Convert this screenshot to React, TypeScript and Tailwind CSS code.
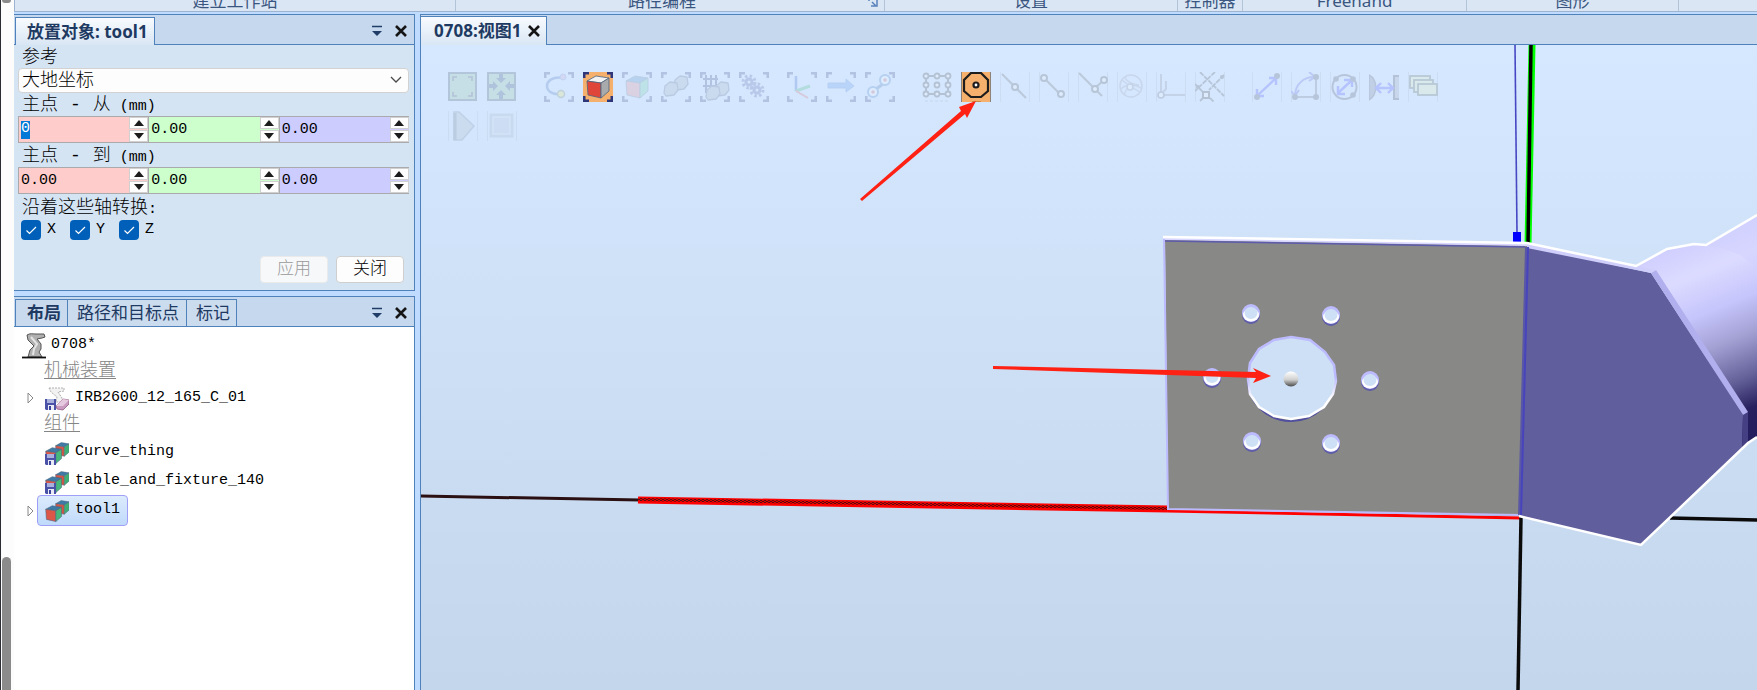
import type { ReactNode } from "react";

const songti = "font-['Liberation_Mono','Noto_Sans_CJK_SC_Light','Noto_Sans_CJK_SC',monospace] font-light";

type IconProps = { children: ReactNode; dim?: boolean };

function Glyph({ children, dim = true }: IconProps) {
  return (
    <svg viewBox="0 0 30 30" className={dim ? "block size-[30px] opacity-20" : "block size-[30px]"} fill="none" aria-hidden="true">
      {children}
    </svg>
  );
}

function Corners() {
  return <path d="M1 6V1H6M24 1h5v5M29 24v5h-5M6 29H1v-5" stroke="#2c3678" strokeWidth="3" />;
}

function SideLines() {
  return <path d="M.5 0v30M29.5 0v30" stroke="#a9b8cc" strokeWidth="1" />;
}

function Cube({ x = 0, y = 0, s = 1, front, top, side }: { x?: number; y?: number; s?: number; front: string; top: string; side: string }) {
  return (
    <g transform={`translate(${x} ${y}) scale(${s})`} stroke="#4c6580" strokeWidth="0.8" strokeLinejoin="round">
      <path d="M1 6 10 1l13 2-8 5z" fill={top} />
      <path d="M1 6l14 2v15L2 20z" fill={front} />
      <path d="M15 8l8-5v13l-8 7z" fill={side} />
    </g>
  );
}

function Blob({ x, y }: { x: number; y: number }) {
  return (
    <path
      transform={`translate(${x} ${y})`}
      d="M2 5 7 1l7 1 1 7-4 5-8 1-2-3z"
      fill="#a6aeb8"
      stroke="#4f6078"
      strokeWidth="1.3"
      strokeLinejoin="round"
    />
  );
}

type Tool = { name: string; active?: boolean; icon: ReactNode };

const viewTools: Tool[] = [
  {
    name: "查看全部",
    icon: (
      <Glyph>
        <rect x="1" y="1" width="27" height="27" fill="#8fc48a" stroke="#2d4450" strokeWidth="2" />
        <path d="M5 9V5h4M20 5h4v4M24 20v4h-4M9 24H5v-4" stroke="#334" strokeWidth="1.6" />
      </Glyph>
    ),
  },
  {
    name: "查看中心",
    icon: (
      <Glyph>
        <rect x="1" y="1" width="27" height="27" fill="#8fc48a" stroke="#2d4450" strokeWidth="2" />
        <path d="M14 11 9 6h3V2h4v4h3zM14 18l-5 5h3v4h4v-4h3zM11 14 6 9v3H2v4h4v3zM18 14l5-5v3h4v4h-4v3z" fill="#1e3a5c" />
      </Glyph>
    ),
  },
];

const selectTools: Tool[] = [
  {
    name: "选择曲线",
    icon: (
      <Glyph>
        <Corners />
        <path d="M19 6C9 4 3 9 3 14c0 6 7 9 14 8" stroke="#3a66b8" strokeWidth="2.5" />
        <circle cx="19" cy="5" r="3" fill="#c9a0c8" stroke="#7684c8" />
        <circle cx="17" cy="22" r="3.5" fill="#f3e94a" stroke="#6a7860" strokeWidth="1.5" />
      </Glyph>
    ),
  },
  {
    name: "选择表面",
    active: true,
    icon: (
      <Glyph dim={false}>
        <rect width="30" height="30" fill="#f4b06c" />
        <Corners />
        <Cube x={3} y={3} front="#e0453a" top="#f2f2f2" side="#a9aaac" />
      </Glyph>
    ),
  },
  {
    name: "选择物体",
    icon: (
      <Glyph>
        <Corners />
        <Cube x={3} y={3} front="#ef7d78" top="#3f82b8" side="#5fd393" />
      </Glyph>
    ),
  },
  {
    name: "选择部件",
    icon: (
      <Glyph>
        <Corners />
        <Blob x={12} y={3} />
        <Blob x={2} y={9} />
      </Glyph>
    ),
  },
  {
    name: "选择组",
    icon: (
      <Glyph>
        <Corners />
        <path d="M3 7h15M3 14h15M6 3v18M11 3v14M16 3v11" stroke="#2c3678" strokeWidth="2" />
        <Blob x={14} y={9} />
        <Blob x={5} y={13} />
      </Glyph>
    ),
  },
  {
    name: "选择机械装置",
    icon: (
      <Glyph>
        <Corners />
        <circle cx="10" cy="10" r="3" stroke="#46509c" strokeWidth="3" />
        <circle cx="10" cy="10" r="6" stroke="#46509c" strokeWidth="3" strokeDasharray="2.4 2.3" />
        <circle cx="18" cy="18" r="3" stroke="#46509c" strokeWidth="3" />
        <circle cx="18" cy="18" r="6" stroke="#46509c" strokeWidth="3" strokeDasharray="2.4 2.3" />
      </Glyph>
    ),
  },
];

const targetTools: Tool[] = [
  {
    name: "选择目标点或框架",
    icon: (
      <Glyph>
        <Corners />
        <path d="M9 4v15" stroke="#2456c0" strokeWidth="2.5" />
        <path d="m9 19 14-5" stroke="#31b565" strokeWidth="3" />
        <path d="m9 19 12 7" stroke="#e05252" strokeWidth="2" />
      </Glyph>
    ),
  },
  {
    name: "选择移动指令",
    icon: (
      <Glyph>
        <Corners />
        <path d="M2 11h18V7l8 7-8 6v-4H2z" fill="#4d8ee8" stroke="#346bc0" strokeWidth="0.8" />
      </Glyph>
    ),
  },
  {
    name: "选择路径",
    icon: (
      <Glyph>
        <Corners />
        <path d="m11 17 7-5" stroke="#3b66a8" strokeWidth="3" />
        <circle cx="8" cy="20" r="5" fill="#fff" stroke="#3b7ac0" strokeWidth="2" />
        <circle cx="20" cy="8" r="5" fill="#fff" stroke="#3b7ac0" strokeWidth="2" />
        <circle cx="8" cy="20" r="1.8" fill="#d05050" />
        <circle cx="20" cy="8" r="1.8" fill="#d05050" />
      </Glyph>
    ),
  },
];

const snapTools: Tool[] = [
  {
    name: "捕捉对象",
    icon: (
      <Glyph>
        <path d="M4 4h22v18H4z" stroke="#333" strokeWidth="2" />
        <g fill="#fff" stroke="#333" strokeWidth="1.8">
          <circle cx="4" cy="4" r="2.5" /><circle cx="15" cy="4" r="2.5" /><circle cx="26" cy="4" r="2.5" />
          <circle cx="4" cy="13" r="2.5" /><circle cx="15" cy="13" r="2.5" /><circle cx="26" cy="13" r="2.5" />
          <circle cx="4" cy="22" r="2.5" /><circle cx="15" cy="22" r="2.5" /><circle cx="26" cy="22" r="2.5" />
        </g>
        <path d="M3 29h25" stroke="#89a" strokeDasharray="3 2" />
      </Glyph>
    ),
  },
  {
    name: "捕捉中心",
    active: true,
    icon: (
      <Glyph dim={false}>
        <rect width="30" height="30" fill="#f4b06c" />
        <path d="M.5 0v30M29.5 0v30" stroke="#8e8378" />
        <path d="M10 1h10l7 7v11l-7 6H10l-7-6V8z" stroke="#1d1d1d" strokeWidth="2.2" />
        <circle cx="15" cy="13" r="2.5" fill="#fff" stroke="#1d1d1d" strokeWidth="2.2" />
        <path d="M11 29.500h9" stroke="#d08844" />
      </Glyph>
    ),
  },
  {
    name: "捕捉中点",
    icon: (
      <Glyph>
        <SideLines />
        <path d="m2 2 24 24" stroke="#555" strokeWidth="2" />
        <circle cx="15" cy="15" r="3" fill="#fff" stroke="#444" strokeWidth="2" />
      </Glyph>
    ),
  },
  {
    name: "捕捉末端",
    icon: (
      <Glyph>
        <SideLines />
        <path d="m5 6 17 17" stroke="#555" strokeWidth="2" />
        <circle cx="5" cy="6" r="3" fill="#fff" stroke="#444" strokeWidth="2" />
        <circle cx="22" cy="22" r="3" fill="#fff" stroke="#444" strokeWidth="2" />
      </Glyph>
    ),
  },
  {
    name: "捕捉边缘",
    icon: (
      <Glyph>
        <SideLines />
        <path d="m1 1 23 23M17 16l9-8" stroke="#555" strokeWidth="2" />
        <circle cx="17" cy="17" r="3" fill="#fff" stroke="#444" strokeWidth="2" />
        <circle cx="26" cy="8" r="3" fill="#fff" stroke="#444" strokeWidth="2" />
      </Glyph>
    ),
  },
  {
    name: "捕捉重心",
    icon: (
      <Glyph>
        <SideLines />
        <circle cx="14" cy="14" r="11" stroke="#99a" strokeWidth="1.5" />
        <path d="M4 17c4-5 16-5 21 0M5 8c5 4 10 8 18 12M8 5c1 5 10 8 14 8M7 22l7-11" stroke="#99a" strokeWidth="1.3" />
        <circle cx="13" cy="15" r="3" fill="#fff" stroke="#889" strokeWidth="1.5" />
      </Glyph>
    ),
  },
  {
    name: "捕捉本地原点",
    icon: (
      <Glyph>
        <SideLines />
        <path d="M5 2v18M8 23h21M7 20l3-3V9" stroke="#889" strokeWidth="2" />
        <circle cx="5" cy="23" r="3" fill="#fff" stroke="#667" strokeWidth="1.6" />
      </Glyph>
    ),
  },
  {
    name: "捕捉网格",
    icon: (
      <Glyph>
        <SideLines />
        <path d="m5 0 24 24M29 3 14 18M20 0 0 19M0 12l8 8M15 26l4 4M8 26l-3 3" stroke="#444" strokeWidth="1.8" strokeDasharray="5 1" />
        <circle cx="3" cy="15" r="2" fill="#444" />
        <circle cx="27" cy="5" r="2" fill="#444" />
        <rect x="8" y="20" width="6" height="6" fill="#fff" stroke="#333" strokeWidth="2" />
      </Glyph>
    ),
  },
];

const measureTools: Tool[] = [
  {
    name: "点到点",
    icon: (
      <Glyph>
        <SideLines />
        <path d="M6 23 23 7M5 17v7h7M17 6h7v7" stroke="#3a38ff" strokeWidth="2.4" />
        <circle cx="5" cy="25" r="3" fill="#445" />
        <circle cx="25" cy="4" r="3" fill="#445" />
      </Glyph>
    ),
  },
  {
    name: "角度",
    icon: (
      <Glyph>
        <SideLines />
        <path d="M25 5v20H4" stroke="#667" strokeWidth="2" />
        <path d="M4 24C4 13 12 5 23 5M18 0l6 5-6 4M0 19l4 5 4-6" stroke="#5856d8" strokeWidth="2" />
        <circle cx="4" cy="25" r="3" fill="#445" />
        <circle cx="25" cy="25" r="3" fill="#445" />
        <circle cx="25" cy="5" r="3" fill="#445" />
      </Glyph>
    ),
  },
  {
    name: "直径",
    icon: (
      <Glyph>
        <SideLines />
        <circle cx="14.5" cy="15" r="12" stroke="#445" strokeWidth="2" />
        <path d="M8 21 21 9M8 14v8h7M14 8h8v7" stroke="#3a38ff" strokeWidth="2.4" />
        <circle cx="6" cy="7" r="2.8" fill="#445" />
        <circle cx="23" cy="7" r="2.8" fill="#445" />
        <circle cx="23" cy="23" r="2.8" fill="#445" />
      </Glyph>
    ),
  },
  {
    name: "最短距离",
    icon: (
      <Glyph>
        <path d="M0 3c9 5 9 19 0 25z" fill="#778" stroke="#445" strokeWidth="1.5" />
        <path d="M30 4h-5v23h5" fill="#99a" stroke="#334" strokeWidth="2" />
        <path d="M7 16h17M12 11l-5 5 5 5M19 11l5 5-5 5" stroke="#3a38ff" strokeWidth="2.4" />
      </Glyph>
    ),
  },
  {
    name: "保持测量",
    icon: (
      <Glyph>
        <SideLines />
        <g fill="#eef2a8" stroke="#44543a" strokeWidth="1.8">
          <rect x="2" y="4" width="20" height="12" />
          <rect x="6" y="8" width="19" height="12" />
          <rect x="10" y="12" width="19" height="11" />
        </g>
      </Glyph>
    ),
  },
];

const simulationTools: Tool[] = [
  {
    name: "播放",
    icon: (
      <Glyph>
        <SideLines />
        <path d="M6 1h5l15 14-12 14H6z" fill="#a9b5be" stroke="#6f8294" strokeWidth="1.5" />
        <path d="M7 2v27" stroke="#566b78" strokeWidth="3" />
      </Glyph>
    ),
  },
  {
    name: "停止",
    icon: (
      <Glyph>
        <SideLines />
        <rect x="4" y="4" width="21" height="21" fill="#b4c2d2" stroke="#9dacbf" strokeWidth="3" />
        <rect x="6" y="6" width="17" height="17" stroke="#d4dde8" strokeWidth="1.5" />
      </Glyph>
    ),
  },
];

function ToolGroup({ tools }: { tools: Tool[] }) {
  return (
    <div className="flex gap-[9px]">
      {tools.map((t) => (
        <button key={t.name} type="button" aria-label={t.name} aria-pressed={!!t.active} className="size-[30px]">
          {t.icon}
        </button>
      ))}
    </div>
  );
}

function CloseIcon() {
  return (
    <svg viewBox="0 0 12 12" className="block size-3" aria-hidden="true">
      <path d="M1 1l10 10M11 1 1 11" stroke="#151515" strokeWidth="2.6" />
    </svg>
  );
}

function PanelControls() {
  return (
    <div className="ml-auto flex items-center gap-3 pr-[7px]">
      <button type="button" aria-label="窗口选项">
        <svg viewBox="0 0 12 12" className="block size-3" aria-hidden="true">
          <path d="M1 1.500h10" stroke="#1f3d66" strokeWidth="1.5" />
          <path d="M1 6h10l-5 5z" fill="#1f3d66" />
        </svg>
      </button>
      <button type="button" aria-label="关闭面板">
        <CloseIcon />
      </button>
    </div>
  );
}

const ribbonGroups = [
  { label: "建立工作站", width: "w-[441px]" },
  { label: "路径编程", width: "w-[429px]", launcher: true },
  { label: "设置", width: "w-[293px]" },
  { label: "控制器", width: "w-[65px]" },
  { label: "Freehand", width: "w-[224px]" },
  { label: "图形", width: "w-[212px]" },
];

function Ribbon() {
  return (
    <header className="flex h-3 shrink-0 overflow-hidden border-b border-l border-[#9db3cf] bg-[#dae6f4] text-[17px] text-[#3a5680]">
      {ribbonGroups.map((g) => (
        <div key={g.label} className={`${g.width} flex shrink-0 items-end justify-center border-r border-[#b4c4d8]`}>
          <span className={g.launcher ? "ml-auto leading-5" : "leading-5"}>{g.label}</span>
          {g.launcher && (
            <button type="button" aria-label="路径编程设置" className="mb-1 ml-auto mr-[6px]">
              <svg viewBox="0 0 10 10" className="block size-[10px]" aria-hidden="true">
                <path d="M1 1h3M1 1v3M4 5l4 4M9 3v6H3" stroke="#5a82bb" strokeWidth="1.5" fill="none" />
              </svg>
            </button>
          )}
        </div>
      ))}
    </header>
  );
}

function AxisInput({ label, value, tone, selected }: { label: string; value: string; tone: string; selected?: boolean }) {
  return (
    <div className={`flex h-[27px] min-w-0 flex-1 border-y border-l border-[#aaa9ab] ${tone}`}>
      <div className="flex min-w-0 flex-1 items-center pl-[2px]">
        <input
          aria-label={label}
          defaultValue={value}
          className={
            selected
              ? "block h-[18px] w-[9px] bg-[#0078d7] text-[15px] text-white outline-none"
              : "block h-full w-full bg-transparent text-[15px] text-black outline-none"
          }
        />
      </div>
      <div className="flex w-[19px] shrink-0 flex-col justify-between">
        <button type="button" aria-label={`${label} 增加`} className="flex h-3 items-center justify-center border border-[#d0d0d0] bg-[#fdfdfd]">
          <svg viewBox="0 0 10 6" className="h-[6px] w-[10px]" aria-hidden="true"><path d="M0 6h10L5 0z" fill="#1b1b1b" /></svg>
        </button>
        <button type="button" aria-label={`${label} 减少`} className="flex h-3 items-center justify-center border border-[#d0d0d0] bg-[#fdfdfd]">
          <svg viewBox="0 0 10 6" className="h-[6px] w-[10px]" aria-hidden="true"><path d="M0 0h10L5 6z" fill="#1b1b1b" /></svg>
        </button>
      </div>
    </div>
  );
}

function PointRow({ direction, first }: { direction: string; first: string }) {
  return (
    <fieldset>
      <legend className="block h-6 pl-1 text-[18px] leading-[26px]">
        主点<span className="px-3">-</span>
        {direction}
        <span className="pl-[9px] text-[15px]">(mm)</span>
      </legend>
      <div className="flex">
        <AxisInput label={`${direction} X`} value={first} tone="bg-[#ffcccc]" selected={first === "0"} />
        <AxisInput label={`${direction} Y`} value="0.00" tone="bg-[#ccffcc]" />
        <AxisInput label={`${direction} Z`} value="0.00" tone="bg-[#ccccff]" />
      </div>
    </fieldset>
  );
}

function AxisCheck({ axis }: { axis: string }) {
  return (
    <label className="flex h-5 items-center gap-[6px] text-[15px] leading-5">
      <span className="relative block size-5">
        <input type="checkbox" defaultChecked className="peer block size-5 appearance-none rounded bg-[#8a8f96] checked:bg-[#005fb8]" />
        <svg viewBox="0 0 20 20" className="pointer-events-none absolute inset-0 hidden size-5 peer-checked:block" fill="none" aria-hidden="true">
          <path d="m5.500 10.500 3 3 6.500-6.500" stroke="#fff" strokeWidth="1.2" />
        </svg>
      </span>
      {axis}
    </label>
  );
}

function PlacePanel() {
  return (
    <section className="border-y border-r border-[#4f81bb]">
      <div className="flex h-[30px] border-b border-[#4f81bb] bg-[#c6d8ed] pl-px pt-[2px]">
        <h2 className="-mb-px flex h-[28px] items-center border-x border-t border-[#4f81bb] bg-gradient-to-b from-[#f8fbfe] to-[#d9e6f4] pl-[11px] pr-[6px] text-[17px] font-bold leading-6 text-[#1e3a62]">
          放置对象: tool1
        </h2>
        <PanelControls />
      </div>
      <form className={`bg-[#d5e4f3] pb-[7px] pl-1 pr-[5px] text-black ${songti}`}>
        <label htmlFor="reference" className="block h-[23px] pl-1 text-[18px] leading-[26px]">参考</label>
        <div className="relative h-6">
          <select id="reference" className="block h-[25px] w-full appearance-none rounded-sm border border-[#d2d2d2] bg-[#fdfdfd] pl-[3px] text-[18px] leading-6">
            <option>大地坐标</option>
          </select>
          <svg viewBox="0 0 12 8" className="pointer-events-none absolute right-[7px] top-2 h-2 w-3" fill="none" aria-hidden="true">
            <path d="m1 1 5 5 5-5" stroke="#4a4a4a" strokeWidth="1.3" />
          </svg>
        </div>
        <PointRow direction="从" first="0" />
        <PointRow direction="到" first="0.00" />
        <p className="h-[26px] pl-1 text-[18px] leading-7">沿着这些轴转换<span className="text-[15px]">:</span></p>
        <div className="flex gap-[14px] pl-[3px]">
          <AxisCheck axis="X" />
          <AxisCheck axis="Y" />
          <AxisCheck axis="Z" />
        </div>
        <div className="flex justify-end gap-2 pr-[5px] pt-4 text-[17px]">
          <button type="button" disabled className="h-[27px] w-[68px] rounded border border-[#eaeaea] bg-[#f7f8f9] leading-6 text-[#999]">应用</button>
          <button type="button" className="h-[27px] w-[68px] rounded border border-[#cfcfcf] bg-[#fdfdfd] leading-6">关闭</button>
        </div>
      </form>
    </section>
  );
}

function FloppyShape() {
  return (
    <g>
      <path d="M0 13h11v11H1l-1-1z" fill="#4a52a8" />
      <rect x="2" y="13" width="7" height="4" fill="#aab0dc" />
      <rect x="3" y="19" width="6" height="5" fill="#e8eaf6" />
      <rect x="4" y="20" width="2" height="4" fill="#3b449a" />
    </g>
  );
}

function StationIcon() {
  return (
    <svg viewBox="0 0 24 26" className="block h-[26px] w-6" aria-hidden="true">
      <path d="M5 2c3-2 6-1 9-1h8l1 3-3 1-5 1 4 5v5l-2 3 3 5H6l2-7 4-4-6-6z" fill="#b0b0b0" stroke="#555" strokeWidth="1" />
      <path d="M9 4l6 7-3 5-1 6" stroke="#e4e4e4" strokeWidth="2" fill="none" />
      <path d="M0 24.500h24" stroke="#111" strokeWidth="1.8" />
    </svg>
  );
}

function MechanismIcon() {
  return (
    <svg viewBox="0 0 24 25" className="block h-[25px] w-6" aria-hidden="true">
      <path d="M4 2h15v3l-6 1 4 6v4h-6l1-5-6-5z" fill="#f2f2f2" stroke="#b0b0b0" strokeDasharray="2 1" />
      <FloppyShape />
      <path d="m11 20 7-7 6 1v4l-6 6-6-1z" fill="#ca9bc0" stroke="#8f5b84" strokeWidth="0.8" />
      <path d="m11 20 7-7 6 1-6 6z" fill="#e5c9df" />
    </svg>
  );
}

function PartIcon({ saved = true }: { saved?: boolean }) {
  return (
    <svg viewBox="0 0 24 24" className="block size-6" aria-hidden="true">
      <Cube x={10} y={1} s={0.62} front="#d85545" top="#3d7ba6" side="#3fae72" />
      <Cube x={0} y={6} s={0.72} front="#dc5747" top="#3d7ba6" side="#46b87b" />
      {saved && <FloppyShape />}
    </svg>
  );
}

function Expander() {
  return (
    <button type="button" aria-label="展开" className="w-[7px]">
      <svg viewBox="0 0 7 12" className="block h-3 w-[7px]" fill="none" aria-hidden="true">
        <path d="M1 1v10l5-5z" stroke="#888" />
      </svg>
    </button>
  );
}

function LayoutPanel() {
  return (
    <section className="flex flex-1 flex-col border-r border-t border-[#4f81bb] bg-white">
      <div className="flex h-[30px] shrink-0 border-b border-[#4f81bb] bg-[#c6d8ed] pl-px pt-[2px]">
        <div role="tablist" className="flex border-l border-[#4f81bb] text-[17px] text-[#1e3a62]">
          <button role="tab" aria-selected="true" type="button" className="border-r border-t border-[#4f81bb] bg-[#c9daee] pl-[11px] pr-[6px] font-bold leading-6">布局</button>
          <button role="tab" aria-selected="false" type="button" className="border-r border-t border-[#4f81bb] bg-[#ccdcef] pl-[9px] pr-[7px] leading-6">路径和目标点</button>
          <button role="tab" aria-selected="false" type="button" className="border-r border-t border-[#4f81bb] bg-[#ccdcef] pl-[9px] pr-[6px] leading-6">标记</button>
        </div>
        <PanelControls />
      </div>
      <div className={`flex flex-col pl-2 pt-[5px] text-[15px] text-black ${songti}`}>
        <div className="flex h-[27px] items-center gap-[5px]"><StationIcon />0708*</div>
        <h3 className="h-[25px] pl-[22px] text-[18px] leading-[25px] text-[#858585] underline underline-offset-2">机械装置</h3>
        <div className="flex h-7 items-center gap-[11px] pl-[5px]">
          <Expander />
          <span className="flex items-center gap-[6px]"><MechanismIcon />IRB2600_12_165_C_01</span>
        </div>
        <h3 className="h-[26px] pl-[22px] text-[18px] leading-[25px] text-[#858585] underline underline-offset-2">组件</h3>
        <div className="flex h-[29px] items-center gap-[6px] pl-[23px]"><PartIcon />Curve_thing</div>
        <div className="flex h-[29px] items-center gap-[6px] pl-[23px]"><PartIcon />table_and_fixture_140</div>
        <div className="flex h-[29px] items-center gap-[3px] pl-[5px]">
          <Expander />
          <span className="flex h-[31px] items-center gap-[6px] rounded border border-[#9f9ff8] bg-gradient-to-b from-[#dcebfd] to-[#c0dafb] px-[7px]">
            <PartIcon saved={false} />tool1
          </span>
        </div>
      </div>
    </section>
  );
}

const holes = [
  [1251, 313],
  [1331, 315],
  [1212, 377],
  [1370, 380],
  [1252, 441],
  [1331, 443],
];

function Scene() {
  return (
    <svg viewBox="421 45 1336 645" preserveAspectRatio="xMinYMin slice" className="absolute inset-0 h-full w-full" fill="none" role="img" aria-label="工作站三维视图">
      <defs>
        <linearGradient id="sky" x1="0" y1="0" x2="0" y2="1">
          <stop offset="0" stopColor="#d6e8ff" />
          <stop offset="1" stopColor="#c4d6eb" />
        </linearGradient>
        <linearGradient id="arm" gradientUnits="userSpaceOnUse" x1="1688" y1="240" x2="1762" y2="420">
          <stop offset="0" stopColor="#cfceff" />
          <stop offset="0.18" stopColor="#dcdbff" />
          <stop offset="0.38" stopColor="#c6c5fc" />
          <stop offset="0.56" stopColor="#a3a1d4" />
          <stop offset="0.76" stopColor="#66639b" />
          <stop offset="0.92" stopColor="#28215f" />
          <stop offset="1" stopColor="#241e5e" />
        </linearGradient>
        <linearGradient id="ball" x1="0" y1="0" x2="0" y2="1">
          <stop offset="0" stopColor="#fff" />
          <stop offset="0.55" stopColor="#cfcfcf" />
          <stop offset="1" stopColor="#4a4a4a" />
        </linearGradient>
        <linearGradient id="rim" x1="0" y1="0" x2="0" y2="1">
          <stop offset="0.5" stopColor="#bdbbff" />
          <stop offset="0.75" stopColor="#fff" />
        </linearGradient>
        <pattern id="weave" width="4" height="2" patternUnits="userSpaceOnUse">
          <rect width="4" height="2" fill="#e00000" />
          <path d="M0 .5h2M2 1.500h2" stroke="#5a0c0c" />
        </pattern>
      </defs>
      <rect x="421" y="45" width="1336" height="645" fill="url(#sky)" />

      <path d="M421 496 640 500" stroke="#2a1012" strokeWidth="3" />
      <path d="M638 500 1168 509" stroke="#f00" strokeWidth="7" />
      <path d="M638 498h2L1168 507v3L638 501z" fill="url(#weave)" />
      <path d="M1168 511 1521 518" stroke="#f00" strokeWidth="3" />
      <path d="M1670 518 1757 520" stroke="#0a0a0a" strokeWidth="3.5" />
      <path d="M1521 517 1518 690" stroke="#0a0a0a" strokeWidth="3.5" />
      <path d="M1515 45 1517 233" stroke="#4747c4" strokeWidth="1.6" />
      <rect x="1513" y="232" width="8" height="10" fill="#00f" />
      <path d="M1532 45 1528 245" stroke="#0f0" strokeWidth="7" />
      <path d="M1531 45 1528 245" stroke="#000" strokeWidth="3.5" />

      <path d="M1636 266 1667 249 1694 244 1706 245 1757 215V437L1742 448 1690 350z" fill="url(#arm)" />
      <path d="M1706 245c22 2 38 10 51 24v-54z" fill="#d2d1ff" opacity="0.5" />
      <path d="M1527 246 1651 273 1743 415 1742 448 1641 545 1520 516z" fill="#605e9c" />
      <path d="M1743 415 1748 412V443L1742 448z" fill="#453f83" />
      <path d="M1651 273 1656 270 1748 412 1743 415z" fill="#b1afed" />
      <path d="M1527 243 1636 266 1656 270 1651 273 1527 248z" fill="#d0cffb" />
      <path d="M1163 238 1527 244V248L1165 241z" fill="#d9d7ff" />
      <path d="M1165 240 1527 246 1520 516 1168 509z" fill="#888886" />
      <path d="M1165 241 1526 247" stroke="#5d5bab" strokeWidth="1.5" />
      <path d="M1164 239 1168 509 1520 515" stroke="#bdbbff" strokeWidth="2" />
      <path d="M1527 247 1520 515" stroke="#5a58a4" strokeWidth="4" />
      <path d="M1528 247 1521 515" stroke="#4845bc" strokeWidth="2" />
      <path d="M1163 237 1527 243 1636 266 1667 249 1694 244 1706 245 1757 215" stroke="#fff" strokeWidth="2.5" />
      <path d="M1519 516 1641 545 1748 443 1757 437" stroke="#fff" strokeWidth="2.5" />

      <ellipse cx="1291" cy="380" rx="43" ry="41" stroke="#504e9e" strokeWidth="2" />
      <path d="M1291 337 1310 340 1325 352 1334 365 1336 381 1333 394 1324 407 1309 416 1291 419 1274 416 1259 407 1250 394 1248 379 1250 363 1259 349 1274 340z" fill="#cee0f5" stroke="url(#rim)" strokeWidth="2.5" />
      {holes.map(([x, y]) => (
        <g key={`${x}-${y}`}>
          <circle cx={x} cy={y + 2} r="9" fill="#5f5ca8" />
          <circle cx={x} cy={y} r="9" fill="#bdbbff" />
          <ellipse cx={x} cy={y + 2} rx="8" ry="6.5" fill="#fff" />
          <ellipse cx={x} cy={y} rx="6.5" ry="6" fill="#cee0f5" />
        </g>
      ))}
      <circle cx="1291" cy="379" r="7.5" fill="url(#ball)" />
    </svg>
  );
}

function Pointers() {
  return (
    <svg viewBox="421 45 1336 645" preserveAspectRatio="xMinYMin slice" className="pointer-events-none absolute inset-0 h-full w-full" aria-hidden="true">
      <g fill="#ff2113">
        <path d="M860 199 961 111 959 107 976 101 967 118 965 114 862 201z" />
        <path d="M993 366 1256 372 1253 368 1271 376 1253 383 1256 378 993 369z" />
      </g>
    </svg>
  );
}

function Viewport() {
  return (
    <main className="flex min-w-0 flex-1 flex-col border-l border-t border-[#4f81bb]">
      <div className="flex h-[30px] shrink-0 border-b border-[#4f81bb] bg-[#c6d8ed] pt-px">
        <div className="flex h-[29px] items-center gap-[7px] border-r border-t border-[#4f81bb] bg-gradient-to-b from-[#f8fbfe] to-[#d9e6f4] pl-[13px] pr-[6px] text-[17px] font-bold text-[#1e3a62]">
          <span className="leading-6">0708:视图1</span>
          <button type="button" aria-label="关闭视图"><CloseIcon /></button>
        </div>
      </div>
      <div className="relative flex-1 overflow-hidden">
        <Scene />
        <div role="toolbar" aria-label="视图工具" className="relative flex flex-col gap-[9px] pl-[27px] pt-[27px]">
          <div className="flex gap-[27px]">
            <ToolGroup tools={viewTools} />
            <div className="flex gap-[18px]">
              <ToolGroup tools={selectTools} />
              <ToolGroup tools={targetTools} />
            </div>
            <ToolGroup tools={snapTools} />
            <ToolGroup tools={measureTools} />
          </div>
          <ToolGroup tools={simulationTools} />
        </div>
        <Pointers />
      </div>
    </main>
  );
}

export default function App() {
  return (
    <div className="flex min-h-screen overflow-hidden bg-[#bfdbff] font-['Noto_Sans','Noto_Sans_CJK_SC',sans-serif]">
      <div className="flex w-[14px] shrink-0 flex-col justify-between border-l border-[#2b2b33] bg-[#fcfcfc] pl-px">
        <div className="h-[3px] w-[9px] rounded-b bg-[#8b8b8b]" />
        <div className="h-[133px] w-[9px] rounded-t-full bg-[#8b8b8b]" />
      </div>
      <div className="flex min-w-0 flex-1 flex-col">
        <Ribbon />
        <div className="flex flex-1 gap-[5px] pt-[2px]">
          <aside className="flex w-[401px] shrink-0 flex-col gap-[5px]">
            <PlacePanel />
            <LayoutPanel />
          </aside>
          <Viewport />
        </div>
      </div>
    </div>
  );
}
